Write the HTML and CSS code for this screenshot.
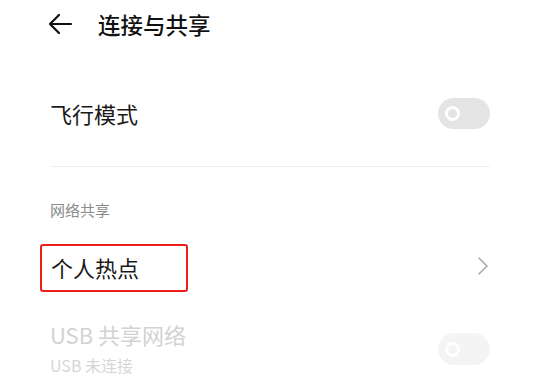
FILE: index.html
```html
<!DOCTYPE html>
<html lang="zh">
<head>
<meta charset="utf-8">
<link rel="stylesheet" href="styles.css">
</head>
<body>
<div class="page">
  <header class="header">
    <svg class="back" width="26" height="22" viewBox="0 0 26 22"><path d="M24 11H3M12 2L3 11l9 9" fill="none" stroke="#111" stroke-width="2.2" stroke-linecap="round" stroke-linejoin="round"/></svg>
    <h1 class="title">连接与共享</h1>
  </header>
  <div class="row row-airplane">
    <span class="label">飞行模式</span>
    <span class="switch"><span class="knob"></span></span>
  </div>
  <div class="divider"></div>
  <div class="section-label">网络共享</div>
  <div class="row row-hotspot">
    <span class="highlight"><span class="label">个人热点</span></span>
    <svg class="chevron" width="12" height="20" viewBox="0 0 12 20"><path d="M2 2l8 8-8 8" fill="none" stroke="#a8a8a8" stroke-width="1.6" stroke-linecap="round" stroke-linejoin="round"/></svg>
  </div>
  <div class="row row-usb">
    <div class="usb-text">
      <span class="label disabled">USB 共享网络</span>
      <span class="sub">USB 未连接</span>
    </div>
    <span class="switch switch-disabled"><span class="knob"></span></span>
  </div>
</div>
</body>
</html>
```
FILE: styles.css
```css
html, body {
  margin: 0;
  padding: 0;
  background: #fff;
}
body {
  font-family: "Noto Sans CJK SC", "Noto Sans", sans-serif;
  color: #111;
  overflow: hidden;
}
.page {
  width: 534px;
  height: 379px;
  display: flex;
  flex-direction: column;
}
.header {
  height: 48px;
  display: flex;
  align-items: center;
  padding-left: 47px;
}
.back {
  display: block;
}
.title {
  margin: 0 0 0 25px;
  font-size: 22.5px;
  font-weight: 500;
  line-height: 30px;
  color: #111;
}
.row {
  display: flex;
  align-items: center;
  justify-content: space-between;
  padding: 0 44px 0 50px;
}
.row-airplane {
  margin-top: 32px;
  height: 66px;
}
.label {
  font-size: 22px;
  line-height: 30px;
  color: #1a1a1a;
}
.switch {
  width: 52px;
  height: 31px;
  border-radius: 16px;
  background: #e4e4e4;
  display: flex;
  align-items: center;
  padding-left: 7px;
  box-sizing: border-box;
}
.knob {
  width: 15px;
  height: 15px;
  border-radius: 50%;
  border: 3.5px solid #fff;
  box-sizing: border-box;
}
.switch-disabled {
  background: #f4f4f4;
  margin-top: 14px;
  height: 32px;
}
.divider {
  height: 1px;
  background: #efefef;
  margin: 20px 44px 0 50px;
}
.section-label {
  margin-top: 33px;
  padding-left: 50px;
  font-size: 15px;
  line-height: 20px;
  color: #8a8a8a;
}
.row-hotspot {
  margin-top: 24px;
  height: 48px;
}
.highlight {
  margin-left: -10px;
  width: 148px;
  height: 48px;
  box-sizing: border-box;
  border: 2.5px solid #ea1f1a;
  border-radius: 3px;
  display: flex;
  align-items: center;
  padding-left: 9px;
  padding-bottom: 2px;
}
.chevron {
  display: block;
  margin-top: -4px;
  margin-right: 1px;
}
.row-usb {
  margin-top: 27px;
  align-items: flex-start;
}
.usb-text {
  display: flex;
  flex-direction: column;
}
.label.disabled {
  color: #d2d2d2;
}
.sub {
  font-size: 16px;
  line-height: 22px;
  margin-top: 5px;
  color: #d6d6d6;
}
```
